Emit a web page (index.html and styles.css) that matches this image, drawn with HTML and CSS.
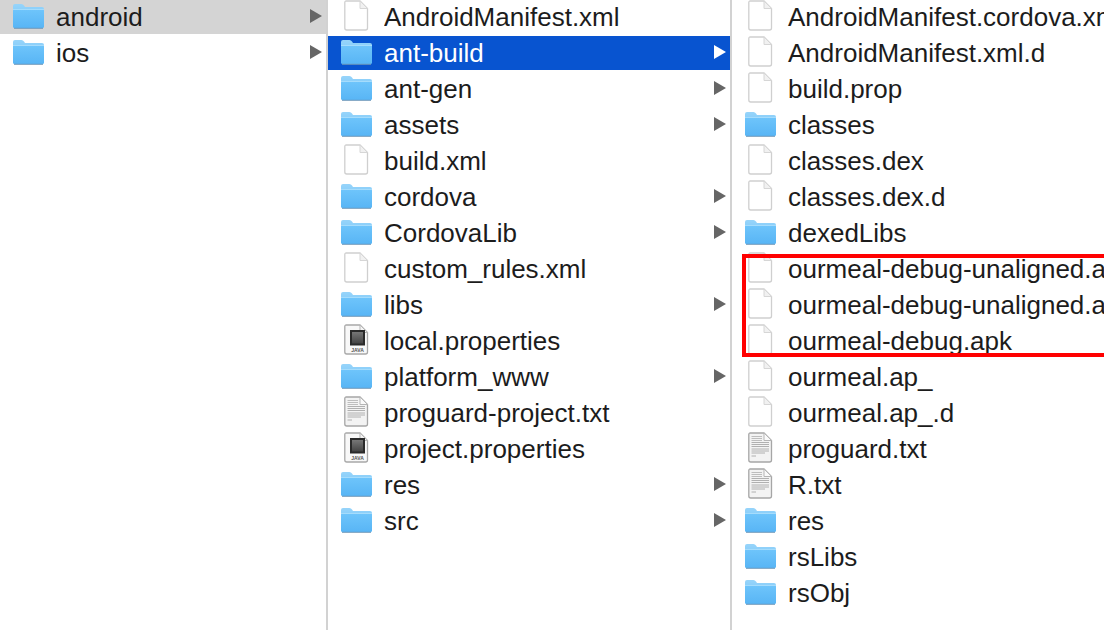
FILE: index.html
```html
<!DOCTYPE html>
<html lang="en">
<head>
<meta charset="utf-8">
<title>Finder columns</title>
<link rel="stylesheet" href="styles.css">
</head>
<body>
<svg class="defs" width="0" height="0" aria-hidden="true">
  <defs>
    <linearGradient id="fb" x1="0" y1="0" x2="0" y2="1"><stop offset="0" stop-color="#6fc5fb"/><stop offset="1" stop-color="#58b5f5"/></linearGradient>
    <linearGradient id="ft" x1="0" y1="0" x2="0" y2="1"><stop offset="0" stop-color="#97d4fa"/><stop offset="1" stop-color="#83ccfa"/></linearGradient>
    <linearGradient id="jv" x1="0" y1="0" x2="0" y2="1"><stop offset="0" stop-color="#777"/><stop offset="1" stop-color="#444"/></linearGradient>
    <symbol id="folder" viewBox="0 0 56 34">
      <path d="M13 6Q13 4 15 4H21.500Q23 4 24 5.500L25 7H42Q44 7 44 9V14H13Z" fill="url(#ft)"/>
      <path d="M13 10.500Q13 9 14.500 9H42.500Q44 9 44 10.500V26.500Q44 28 42.500 28H14.500Q13 28 13 26.500Z" fill="url(#fb)"/>
      <path d="M13 9.500H44" stroke="#a5dcfc" stroke-width="1"/>
      <path d="M14 28.300H43" stroke="#6b97ba" stroke-width="1"/>
    </symbol>
    <symbol id="doc" viewBox="0 0 56 34">
      <path d="M16.800 2.500Q16.800 1 18.300 1H32L39.500 8.500V28Q39.500 30 37.500 30H18.800Q16.800 30 16.800 28Z" fill="#fff" stroke="#cfcfcf" stroke-width="1.300"/>
      <path d="M32 1V8.500H39.500Z" fill="#f1f1f1" stroke="#d6d6d6"/>
    </symbol>
    <symbol id="text" viewBox="0 0 56 34">
      <path d="M16.800 2.500Q16.800 1 18.300 1H32L39.500 8.500V28Q39.500 30 37.500 30H18.800Q16.800 30 16.800 28Z" fill="#f3f3f3" stroke="#a6a6a6" stroke-width="1.300"/>
      <path d="M32 1V8.500H39.500Z" fill="#fafafa" stroke="#b5b5b5"/>
      <path d="M19.500 4.500H30M19.500 6.500H30M19.500 8.500H30" stroke="#bdbdbd" stroke-width="1"/>
      <path d="M19.500 10.500H37M19.500 12.500H37M19.500 14.500H37M19.500 17H37M19.500 19H37M19.500 21H33M19.500 24H24" stroke="#b0b0b0" stroke-width="1"/>
    </symbol>
    <symbol id="java" viewBox="0 0 56 34">
      <path d="M16.800 2.500Q16.800 1 18.300 1H32L39.500 8.500V28Q39.500 30 37.500 30H18.800Q16.800 30 16.800 28Z" fill="#f8f8f8" stroke="#a8a8a8" stroke-width="1.300"/>
      <path d="M32 1V8.500H39.500Z" fill="#f4f4f4" stroke="#b5b5b5"/>
      <rect x="22" y="6" width="15" height="15.500" fill="#2a2a2a"/>
      <rect x="24" y="8" width="11" height="11.500" fill="url(#jv)"/>
      <text x="29.500" y="28" text-anchor="middle" font-family="Liberation Sans, sans-serif" font-size="5" font-weight="700" fill="#555">JAVA</text>
    </symbol>
    <symbol id="arrow" viewBox="0 0 12 14" preserveAspectRatio="none">
      <path d="M0 0L12 7L0 14Z" fill="currentColor"/>
    </symbol>
  </defs>
</svg>
<main class="browser">
  <section class="column first">
    <div class="row active"><svg class="icon"><use href="#folder"/></svg><span class="name">android</span><svg class="arrow"><use href="#arrow"/></svg></div>
    <div class="row"><svg class="icon"><use href="#folder"/></svg><span class="name">ios</span><svg class="arrow"><use href="#arrow"/></svg></div>
  </section>
  <section class="column second">
    <div class="row"><svg class="icon"><use href="#doc"/></svg><span class="name">AndroidManifest.xml</span></div>
    <div class="row selected"><svg class="icon"><use href="#folder"/></svg><span class="name">ant-build</span><svg class="arrow"><use href="#arrow"/></svg></div>
    <div class="row"><svg class="icon"><use href="#folder"/></svg><span class="name">ant-gen</span><svg class="arrow"><use href="#arrow"/></svg></div>
    <div class="row"><svg class="icon"><use href="#folder"/></svg><span class="name">assets</span><svg class="arrow"><use href="#arrow"/></svg></div>
    <div class="row"><svg class="icon"><use href="#doc"/></svg><span class="name">build.xml</span></div>
    <div class="row"><svg class="icon"><use href="#folder"/></svg><span class="name">cordova</span><svg class="arrow"><use href="#arrow"/></svg></div>
    <div class="row"><svg class="icon"><use href="#folder"/></svg><span class="name">CordovaLib</span><svg class="arrow"><use href="#arrow"/></svg></div>
    <div class="row"><svg class="icon"><use href="#doc"/></svg><span class="name">custom_rules.xml</span></div>
    <div class="row"><svg class="icon"><use href="#folder"/></svg><span class="name">libs</span><svg class="arrow"><use href="#arrow"/></svg></div>
    <div class="row"><svg class="icon"><use href="#java"/></svg><span class="name">local.properties</span></div>
    <div class="row"><svg class="icon"><use href="#folder"/></svg><span class="name">platform_www</span><svg class="arrow"><use href="#arrow"/></svg></div>
    <div class="row"><svg class="icon"><use href="#text"/></svg><span class="name">proguard-project.txt</span></div>
    <div class="row"><svg class="icon"><use href="#java"/></svg><span class="name">project.properties</span></div>
    <div class="row"><svg class="icon"><use href="#folder"/></svg><span class="name">res</span><svg class="arrow"><use href="#arrow"/></svg></div>
    <div class="row"><svg class="icon"><use href="#folder"/></svg><span class="name">src</span><svg class="arrow"><use href="#arrow"/></svg></div>
  </section>
  <section class="column third">
    <div class="row"><svg class="icon"><use href="#doc"/></svg><span class="name">AndroidManifest.cordova.xml</span></div>
    <div class="row"><svg class="icon"><use href="#doc"/></svg><span class="name">AndroidManifest.xml.d</span></div>
    <div class="row"><svg class="icon"><use href="#doc"/></svg><span class="name">build.prop</span></div>
    <div class="row"><svg class="icon"><use href="#folder"/></svg><span class="name">classes</span></div>
    <div class="row"><svg class="icon"><use href="#doc"/></svg><span class="name">classes.dex</span></div>
    <div class="row"><svg class="icon"><use href="#doc"/></svg><span class="name">classes.dex.d</span></div>
    <div class="row"><svg class="icon"><use href="#folder"/></svg><span class="name">dexedLibs</span></div>
    <div class="row"><svg class="icon"><use href="#doc"/></svg><span class="name">ourmeal-debug-unaligned.apk</span></div>
    <div class="row"><svg class="icon"><use href="#doc"/></svg><span class="name">ourmeal-debug-unaligned.apk</span></div>
    <div class="row"><svg class="icon"><use href="#doc"/></svg><span class="name">ourmeal-debug.apk</span></div>
    <div class="row"><svg class="icon"><use href="#doc"/></svg><span class="name">ourmeal.ap_</span></div>
    <div class="row"><svg class="icon"><use href="#doc"/></svg><span class="name">ourmeal.ap_.d</span></div>
    <div class="row"><svg class="icon"><use href="#text"/></svg><span class="name">proguard.txt</span></div>
    <div class="row"><svg class="icon"><use href="#text"/></svg><span class="name">R.txt</span></div>
    <div class="row"><svg class="icon"><use href="#folder"/></svg><span class="name">res</span></div>
    <div class="row"><svg class="icon"><use href="#folder"/></svg><span class="name">rsLibs</span></div>
    <div class="row"><svg class="icon"><use href="#folder"/></svg><span class="name">rsObj</span></div>
  </section>
  <div class="highlight"></div>
</main>
</body>
</html>
```
FILE: styles.css
```css
html, body {
  margin: 0;
  padding: 0;
  width: 1104px;
  height: 630px;
  overflow: hidden;
  background: #fff;
}

.defs {
  position: absolute;
}

.browser {
  position: relative;
  display: flex;
  width: 1104px;
  height: 630px;
  overflow: hidden;
  font-family: "Liberation Sans", Arial, sans-serif;
  font-size: 26px;
  color: #1c1c1c;
}

.column {
  display: flex;
  flex-direction: column;
  gap: 2px;
  box-sizing: border-box;
  height: 100%;
  overflow: hidden;
}

.first {
  width: 328px;
  border-right: 2px solid #d2d2d2;
}

.second {
  width: 404px;
  border-right: 2px solid #d2d2d2;
}

.third {
  flex: 1;
  min-width: 0;
}

.row {
  display: flex;
  align-items: center;
  flex: none;
  height: 34px;
  white-space: nowrap;
}

.active {
  background: #d4d4d4;
}

.selected {
  background: #0854d0;
  color: #fff;
}

.icon {
  flex: none;
  width: 56px;
  height: 34px;
}

.name {
  flex: 1;
  min-width: 0;
  overflow: hidden;
}

.third .name {
  overflow: visible;
}

.arrow {
  flex: none;
  width: 12px;
  height: 14px;
  margin: 0 4px 2px 8px;
  color: #666;
}

.selected .arrow {
  color: #fff;
}

.highlight {
  position: absolute;
  left: 742px;
  top: 254px;
  width: 400px;
  height: 103px;
  box-sizing: border-box;
  border: 4px solid #f00;
}
```
